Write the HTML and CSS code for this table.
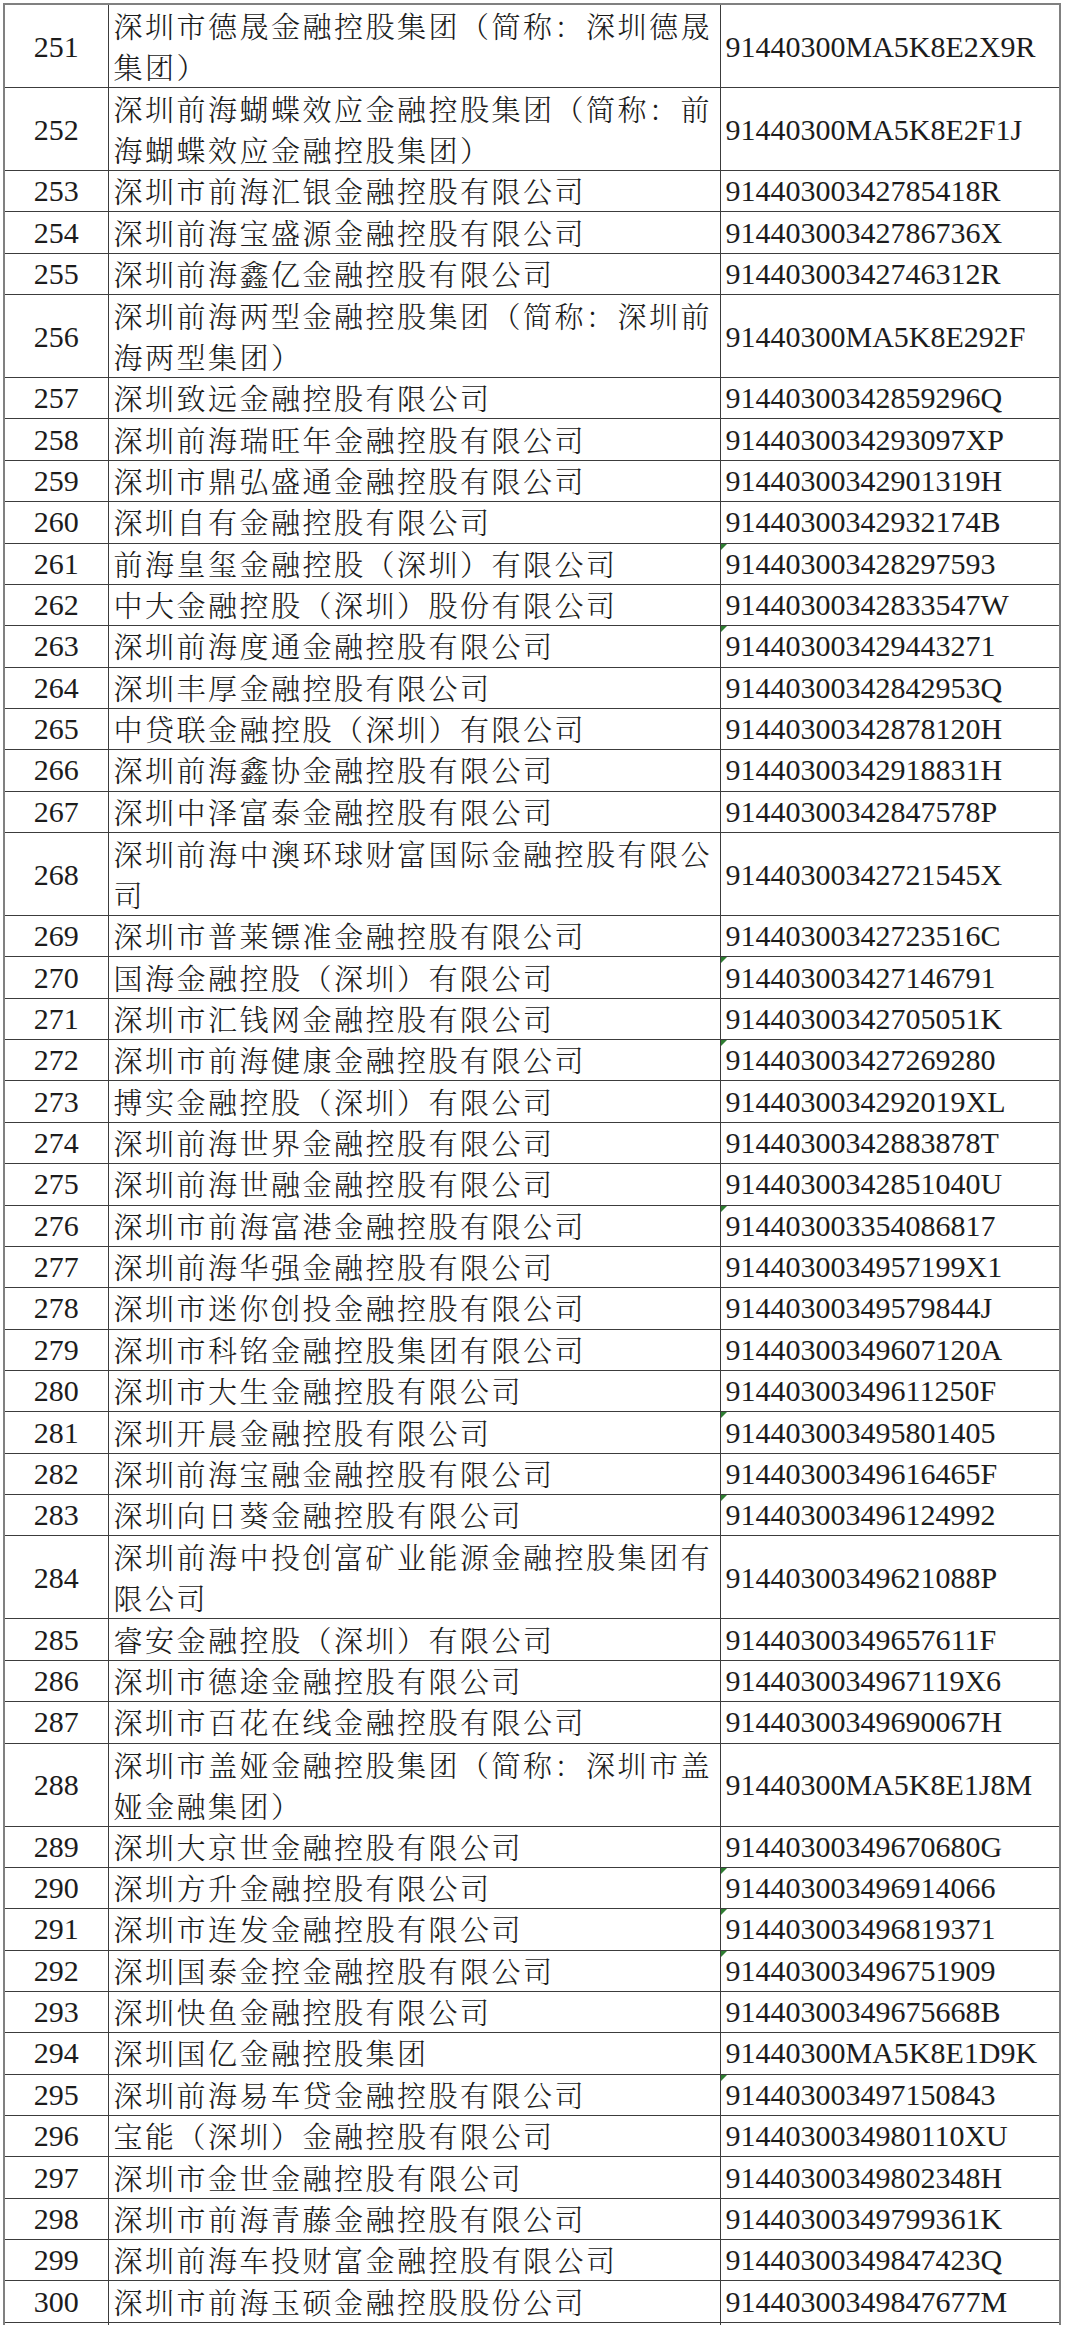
FILE: index.html
```html
<!DOCTYPE html>
<html lang="zh-CN">
<head>
<meta charset="utf-8">
<title>金融控股企业名单 251-300</title>
<link rel="stylesheet" href="styles.css">
</head>
<body>
<div class="sheet">
<table class="list">
<colgroup><col class="c-no"><col class="c-name"><col class="c-code"></colgroup>
<tbody>
<tr class="tall"><td class="no">251</td><td class="name">深圳市德晟金融控股集团（简称：深圳德晟集团）</td><td class="code">91440300MA5K8E2X9R</td></tr>
<tr class="tall"><td class="no">252</td><td class="name">深圳前海蝴蝶效应金融控股集团（简称：前海蝴蝶效应金融控股集团）</td><td class="code">91440300MA5K8E2F1J</td></tr>
<tr><td class="no">253</td><td class="name">深圳市前海汇银金融控股有限公司</td><td class="code">91440300342785418R</td></tr>
<tr><td class="no">254</td><td class="name">深圳前海宝盛源金融控股有限公司</td><td class="code">91440300342786736X</td></tr>
<tr><td class="no">255</td><td class="name">深圳前海鑫亿金融控股有限公司</td><td class="code">91440300342746312R</td></tr>
<tr class="tall"><td class="no">256</td><td class="name">深圳前海两型金融控股集团（简称：深圳前海两型集团）</td><td class="code">91440300MA5K8E292F</td></tr>
<tr><td class="no">257</td><td class="name">深圳致远金融控股有限公司</td><td class="code">91440300342859296Q</td></tr>
<tr><td class="no">258</td><td class="name">深圳前海瑞旺年金融控股有限公司</td><td class="code">9144030034293097XP</td></tr>
<tr><td class="no">259</td><td class="name">深圳市鼎弘盛通金融控股有限公司</td><td class="code">91440300342901319H</td></tr>
<tr><td class="no">260</td><td class="name">深圳自有金融控股有限公司</td><td class="code">91440300342932174B</td></tr>
<tr><td class="no">261</td><td class="name">前海皇玺金融控股（深圳）有限公司</td><td class="code flag">914403003428297593</td></tr>
<tr><td class="no">262</td><td class="name">中大金融控股（深圳）股份有限公司</td><td class="code">91440300342833547W</td></tr>
<tr><td class="no">263</td><td class="name">深圳前海度通金融控股有限公司</td><td class="code flag">914403003429443271</td></tr>
<tr><td class="no">264</td><td class="name">深圳丰厚金融控股有限公司</td><td class="code">91440300342842953Q</td></tr>
<tr><td class="no">265</td><td class="name">中贷联金融控股（深圳）有限公司</td><td class="code">91440300342878120H</td></tr>
<tr><td class="no">266</td><td class="name">深圳前海鑫协金融控股有限公司</td><td class="code">91440300342918831H</td></tr>
<tr><td class="no">267</td><td class="name">深圳中泽富泰金融控股有限公司</td><td class="code">91440300342847578P</td></tr>
<tr class="tall"><td class="no">268</td><td class="name">深圳前海中澳环球财富国际金融控股有限公司</td><td class="code">91440300342721545X</td></tr>
<tr><td class="no">269</td><td class="name">深圳市普莱镖准金融控股有限公司</td><td class="code">91440300342723516C</td></tr>
<tr><td class="no">270</td><td class="name">国海金融控股（深圳）有限公司</td><td class="code flag">914403003427146791</td></tr>
<tr><td class="no">271</td><td class="name">深圳市汇钱网金融控股有限公司</td><td class="code">91440300342705051K</td></tr>
<tr><td class="no">272</td><td class="name">深圳市前海健康金融控股有限公司</td><td class="code flag">914403003427269280</td></tr>
<tr><td class="no">273</td><td class="name">搏实金融控股（深圳）有限公司</td><td class="code">9144030034292019XL</td></tr>
<tr><td class="no">274</td><td class="name">深圳前海世界金融控股有限公司</td><td class="code">91440300342883878T</td></tr>
<tr><td class="no">275</td><td class="name">深圳前海世融金融控股有限公司</td><td class="code">91440300342851040U</td></tr>
<tr><td class="no">276</td><td class="name">深圳市前海富港金融控股有限公司</td><td class="code flag">914403003354086817</td></tr>
<tr><td class="no">277</td><td class="name">深圳前海华强金融控股有限公司</td><td class="code">9144030034957199X1</td></tr>
<tr><td class="no">278</td><td class="name">深圳市迷你创投金融控股有限公司</td><td class="code">91440300349579844J</td></tr>
<tr><td class="no">279</td><td class="name">深圳市科铭金融控股集团有限公司</td><td class="code">91440300349607120A</td></tr>
<tr><td class="no">280</td><td class="name">深圳市大生金融控股有限公司</td><td class="code">91440300349611250F</td></tr>
<tr><td class="no">281</td><td class="name">深圳开晨金融控股有限公司</td><td class="code flag">914403003495801405</td></tr>
<tr><td class="no">282</td><td class="name">深圳前海宝融金融控股有限公司</td><td class="code">91440300349616465F</td></tr>
<tr><td class="no">283</td><td class="name">深圳向日葵金融控股有限公司</td><td class="code flag">914403003496124992</td></tr>
<tr class="tall"><td class="no">284</td><td class="name">深圳前海中投创富矿业能源金融控股集团有限公司</td><td class="code">91440300349621088P</td></tr>
<tr><td class="no">285</td><td class="name">睿安金融控股（深圳）有限公司</td><td class="code">91440300349657611F</td></tr>
<tr><td class="no">286</td><td class="name">深圳市德途金融控股有限公司</td><td class="code">9144030034967119X6</td></tr>
<tr><td class="no">287</td><td class="name">深圳市百花在线金融控股有限公司</td><td class="code">91440300349690067H</td></tr>
<tr class="tall"><td class="no">288</td><td class="name">深圳市盖娅金融控股集团（简称：深圳市盖娅金融集团）</td><td class="code">91440300MA5K8E1J8M</td></tr>
<tr><td class="no">289</td><td class="name">深圳大京世金融控股有限公司</td><td class="code">91440300349670680G</td></tr>
<tr><td class="no">290</td><td class="name">深圳方升金融控股有限公司</td><td class="code flag">914403003496914066</td></tr>
<tr><td class="no">291</td><td class="name">深圳市连发金融控股有限公司</td><td class="code flag">914403003496819371</td></tr>
<tr><td class="no">292</td><td class="name">深圳国泰金控金融控股有限公司</td><td class="code flag">914403003496751909</td></tr>
<tr><td class="no">293</td><td class="name">深圳快鱼金融控股有限公司</td><td class="code">91440300349675668B</td></tr>
<tr><td class="no">294</td><td class="name">深圳国亿金融控股集团</td><td class="code">91440300MA5K8E1D9K</td></tr>
<tr><td class="no">295</td><td class="name">深圳前海易车贷金融控股有限公司</td><td class="code flag">914403003497150843</td></tr>
<tr><td class="no">296</td><td class="name">宝能（深圳）金融控股有限公司</td><td class="code">9144030034980110XU</td></tr>
<tr><td class="no">297</td><td class="name">深圳市金世金融控股有限公司</td><td class="code">91440300349802348H</td></tr>
<tr><td class="no">298</td><td class="name">深圳市前海青藤金融控股有限公司</td><td class="code">91440300349799361K</td></tr>
<tr><td class="no">299</td><td class="name">深圳前海车投财富金融控股有限公司</td><td class="code">91440300349847423Q</td></tr>
<tr><td class="no">300</td><td class="name">深圳市前海玉硕金融控股股份公司</td><td class="code">91440300349847677M</td></tr>
<tr><td class="no"></td><td class="name"></td><td class="code"></td></tr>
</tbody>
</table>
</div>
</body>
</html>
```
FILE: styles.css
```css
html, body {
  margin: 0;
  padding: 0;
  background: #ffffff;
}

.sheet {
  padding: 3px 0 0 3px;
}

.list {
  border-collapse: collapse;
  table-layout: fixed;
  width: 1056px;
  border: 2px solid #808080;
  color: #1c1c1c;
}

.c-no { width: 104px; }
.c-name { width: 612px; }
.c-code { width: 340px; }

.list td {
  border: 1px solid #3c3c3c;
  padding: 0;
  height: 40.36px;
  line-height: 40px;
  vertical-align: middle;
  white-space: normal;
}

.list tr.tall td {
  line-height: 41px;
}

.no {
  text-align: center;
  font-family: "Liberation Serif", "Times New Roman", serif;
  font-size: 30px;
}

.name {
  padding-left: 5px !important;
  font-family: "Noto Serif CJK SC", "Noto Sans CJK SC", sans-serif;
  font-size: 29px;
  font-weight: 300;
  letter-spacing: 2.5px;
  line-break: strict;
}

.code {
  position: relative;
  padding-left: 5px !important;
  font-family: "Liberation Serif", "Times New Roman", serif;
  font-size: 30px;
  letter-spacing: 0;
}

.flag::before {
  content: "";
  position: absolute;
  left: 0;
  top: 0;
  width: 0;
  height: 0;
  border-top: 6px solid #2e7d32;
  border-right: 6px solid transparent;
}
```
